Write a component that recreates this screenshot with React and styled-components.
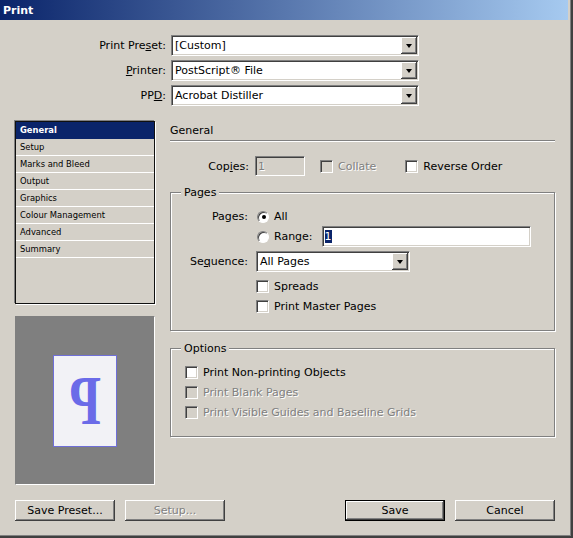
import React from "react";
import styled, { createGlobalStyle, css } from "styled-components";

const GlobalStyle = createGlobalStyle`
  html, body {
    margin: 0;
    padding: 0;
    background: #d4d0c8;
  }
  body {
    font-family: "DejaVu Sans", Tahoma, sans-serif;
    font-size: 11px;
    color: #000;
  }
`;

const sunken = css`
  box-sizing: border-box;
  border: 1px solid;
  border-color: #808080 #ffffff #ffffff #808080;
  box-shadow: inset 1px 1px 0 #404040, inset -1px -1px 0 #d4d0c8;
`;

const raised = css`
  box-shadow: inset -1px -1px 0 #404040, inset 1px 1px 0 #ffffff,
    inset -2px -2px 0 #808080, inset 2px 2px 0 #d4d0c8;
`;

const disabledText = css`
  color: #808080;
  text-shadow: 1px 1px 0 #ffffff;
`;

const Window = styled.div`
  width: 573px;
  height: 538px;
  box-sizing: border-box;
  padding: 0 3px 3px 0;
  border-right: 2px solid #404040;
  border-bottom: 2px solid #404040;
  box-shadow: inset -1px -1px 0 #808080;
  background: #d4d0c8;
  display: flex;
  flex-direction: column;
`;

const TitleBar = styled.div`
  height: 20px;
  display: flex;
  align-items: center;
  padding-left: 3px;
  background: linear-gradient(to right, #0a246a, #a6caf0);
  color: #fff;
  font-weight: bold;
  font-size: 11px;
`;

const Content = styled.div`
  flex: 1;
  display: flex;
  flex-direction: column;
  padding: 15px 13px 0 15px;
`;

const PresetGrid = styled.div`
  display: grid;
  grid-template-columns: 151px 248px;
  column-gap: 5px;
  row-gap: 4px;
`;

const Label = styled.span`
  text-align: right;
  align-self: center;
  white-space: nowrap;
`;

const Combo = styled.div`
  ${sunken};
  width: ${(p) => p.$width}px;
  height: 21px;
  padding: 1px;
  display: flex;
`;

const ComboValue = styled.div`
  flex: 1;
  background: #fff;
  line-height: 17px;
  padding-left: 2px;
  white-space: nowrap;
  overflow: hidden;
`;

const DropButton = styled.div`
  width: 16px;
  height: 17px;
  background: #d4d0c8;
  ${raised};
  display: flex;
  align-items: center;
  justify-content: center;

  &::after {
    content: "";
    border-left: 3.5px solid transparent;
    border-right: 3.5px solid transparent;
    border-top: 4px solid #000;
    margin-top: 1px;
  }
`;

const Main = styled.div`
  display: flex;
  gap: 15px;
  margin-top: 15px;
`;

const LeftCol = styled.div`
  width: 140px;
  display: flex;
  flex-direction: column;
  gap: 12px;
`;

const List = styled.div`
  height: 183px;
  box-sizing: border-box;
  border: 1px solid #101010;
  box-shadow: -1px -1px 0 #808080, 1px 1px 0 #ffffff;
  background: #d4d0c8;
`;

const ListItem = styled.div`
  height: 17px;
  box-sizing: border-box;
  line-height: 17px;
  padding-left: 4px;
  font-size: 8.4px;
  border-bottom: 1px solid #ffffff;
  white-space: nowrap;
  ${(p) =>
    p.$active &&
    css`
      background: #0a246a;
      color: #fff;
      font-weight: bold;
      border-bottom-color: #0a246a;
    `}
`;

const Preview = styled.div`
  height: 169px;
  box-sizing: border-box;
  background: #7f7f7f;
  border: 1px solid;
  border-color: #7f7f7f #ffffff #ffffff #7f7f7f;
  display: flex;
  align-items: center;
  justify-content: center;
`;

const PreviewPage = styled.div`
  width: 64px;
  height: 92px;
  box-sizing: border-box;
  background: #f2f2f6;
  border: 1px solid #6f6fd8;
  display: flex;
  align-items: center;
  justify-content: center;
`;

const Glyph = styled.span`
  font-family: "Liberation Serif", "Times New Roman", serif;
  font-weight: bold;
  font-size: 66px;
  line-height: 1;
  color: #6b6be8;
  transform: scale(-0.78, 1.06);
  margin-left: 1px;
`;

const RightCol = styled.div`
  flex: 1;
  display: flex;
  flex-direction: column;
`;

const SectionHeader = styled.div`
  height: 19px;
  line-height: 19px;
  border-bottom: 1px solid #808080;
  box-shadow: 0 1px 0 #ffffff;
`;

const CopiesRow = styled.div`
  display: flex;
  align-items: center;
  height: 20px;
  margin-top: 15px;
`;

const FieldLabel = styled.span`
  width: ${(p) => p.$width}px;
  text-align: right;
  margin-right: 6px;
  white-space: nowrap;
`;

const TextField = styled.div`
  ${sunken};
  width: ${(p) => p.$width}px;
  height: ${(p) => p.$height}px;
  padding: 0 2px;
  display: flex;
  align-items: center;
  background: ${(p) => (p.$disabled ? "#d4d0c8" : "#ffffff")};
  ${(p) => p.$disabled && disabledText};
`;

const Selected = styled.span`
  background: #0a246a;
  color: #fff;
  line-height: 13px;
`;

const CheckLabel = styled.label`
  display: flex;
  align-items: center;
  gap: 5px;
  margin-left: ${(p) => p.$offset || 0}px;
  height: ${(p) => p.$height || 20}px;
  white-space: nowrap;
  ${(p) => p.$disabled && disabledText};
`;

const CheckBox = styled.span`
  ${sunken};
  width: 13px;
  height: 13px;
  flex: none;
  background: ${(p) => (p.$disabled ? "#d4d0c8" : "#ffffff")};
`;

const RadioDot = styled.span`
  width: 12px;
  height: 12px;
  box-sizing: border-box;
  flex: none;
  margin-left: 1px;
  border-radius: 50%;
  border: 1px solid;
  border-color: #808080 #ffffff #ffffff #808080;
  box-shadow: inset 1px 1px 0 #404040;
  background: #fff;
  display: flex;
  align-items: center;
  justify-content: center;

  &::after {
    content: "";
    width: 4px;
    height: 4px;
    border-radius: 50%;
    background: ${(p) => (p.$checked ? "#000" : "transparent")};
    margin: 1px 0 0 1px;
  }
`;

const Group = styled.fieldset`
  margin: ${(p) => p.$gap}px 0 0;
  padding: ${(p) => p.$top}px 0 ${(p) => p.$bottom}px 10px;
  border: 1px solid #808080;
  box-shadow: inset 1px 1px 0 #ffffff, 1px 1px 0 #ffffff;
  min-width: 0;
`;

const Legend = styled.legend`
  padding: 0 3px;
  line-height: 13px;
  background: #d4d0c8;
`;

const PagesGrid = styled.div`
  display: grid;
  grid-template-columns: 67px 1fr;
  grid-template-rows: 19px 21px 29px 20px 20px;
  column-gap: 8px;
  align-items: center;
`;

const GridLabel = styled.span`
  grid-column: 1;
  text-align: right;
  white-space: nowrap;
`;

const GridCell = styled.div`
  grid-column: 2;
  display: flex;
  align-items: center;
  height: 100%;
`;

const OptionsList = styled.div`
  display: flex;
  flex-direction: column;
  padding-left: 4px;
`;

const ButtonRow = styled.div`
  display: flex;
  gap: 10px;
  margin-top: 15px;
`;

const Button = styled.button`
  width: 100px;
  height: 21px;
  box-sizing: border-box;
  margin: 0;
  margin-left: ${(p) => (p.$push ? "auto" : "0")};
  padding: 0;
  font-family: inherit;
  font-size: 11px;
  color: #000;
  background: #d4d0c8;
  border: ${(p) => (p.$default ? "1px solid #000" : "none")};
  ${raised};
  ${(p) => p.disabled && disabledText};
`;

const sections = [
  "General",
  "Setup",
  "Marks and Bleed",
  "Output",
  "Graphics",
  "Colour Management",
  "Advanced",
  "Summary",
];

const presets = [
  { label: <>Print Pre<u>s</u>et:</>, value: "[Custom]" },
  { label: <><u>P</u>rinter:</>, value: "PostScript® File" },
  { label: <>PP<u>D</u>:</>, value: "Acrobat Distiller" },
];

const options = [
  { text: "Print Non-printing Objects", disabled: false },
  { text: "Print Blank Pages", disabled: true },
  { text: "Print Visible Guides and Baseline Grids", disabled: true },
];

function Check({ children, disabled, offset, height }) {
  return (
    <CheckLabel $disabled={disabled} $offset={offset} $height={height}>
      <CheckBox $disabled={disabled} />
      {children}
    </CheckLabel>
  );
}

export default function App() {
  return (
    <>
      <GlobalStyle />
      <Window>
        <TitleBar>Print</TitleBar>
        <Content>
          <PresetGrid>
            {presets.map((p, i) => (
              <React.Fragment key={i}>
                <Label>{p.label}</Label>
                <Combo $width={248}>
                  <ComboValue>{p.value}</ComboValue>
                  <DropButton />
                </Combo>
              </React.Fragment>
            ))}
          </PresetGrid>

          <Main>
            <LeftCol>
              <List>
                {sections.map((s, i) => (
                  <ListItem key={s} $active={i === 0}>
                    {s}
                  </ListItem>
                ))}
              </List>
              <Preview>
                <PreviewPage>
                  <Glyph>P</Glyph>
                </PreviewPage>
              </Preview>
            </LeftCol>

            <RightCol>
              <SectionHeader>General</SectionHeader>
              <CopiesRow>
                <FieldLabel $width={79}>
                  Cop<u>i</u>es:
                </FieldLabel>
                <TextField $width={50} $height={20} $disabled>
                  1
                </TextField>
                <Check disabled offset={15}>
                  Collate
                </Check>
                <Check offset={29}>Reverse Order</Check>
              </CopiesRow>

              <Group $gap={10} $top={8} $bottom={14}>
                <Legend>Pages</Legend>
                <PagesGrid>
                  <GridLabel>Pages:</GridLabel>
                  <GridCell>
                    <CheckLabel>
                      <RadioDot $checked />
                      All
                    </CheckLabel>
                  </GridCell>
                  <GridCell>
                    <CheckLabel>
                      <RadioDot />
                      Range:
                    </CheckLabel>
                    <TextField
                      $width={209}
                      $height={21}
                      style={{ marginLeft: 9 }}
                    >
                      <Selected>1</Selected>
                    </TextField>
                  </GridCell>
                  <GridLabel>
                    Se<u>q</u>uence:
                  </GridLabel>
                  <GridCell>
                    <Combo $width={154}>
                      <ComboValue>All Pages</ComboValue>
                      <DropButton />
                    </Combo>
                  </GridCell>
                  <GridCell>
                    <Check>Spreads</Check>
                  </GridCell>
                  <GridCell>
                    <Check>Print Master Pages</Check>
                  </GridCell>
                </PagesGrid>
              </Group>

              <Group $gap={11} $top={7} $bottom={14}>
                <Legend>Options</Legend>
                <OptionsList>
                  {options.map((o) => (
                    <Check key={o.text} disabled={o.disabled} height={20}>
                      {o.text}
                    </Check>
                  ))}
                </OptionsList>
              </Group>
            </RightCol>
          </Main>

          <ButtonRow>
            <Button>Save Preset...</Button>
            <Button disabled>Setup...</Button>
            <Button $push $default>
              Save
            </Button>
            <Button>Cancel</Button>
          </ButtonRow>
        </Content>
      </Window>
    </>
  );
}
